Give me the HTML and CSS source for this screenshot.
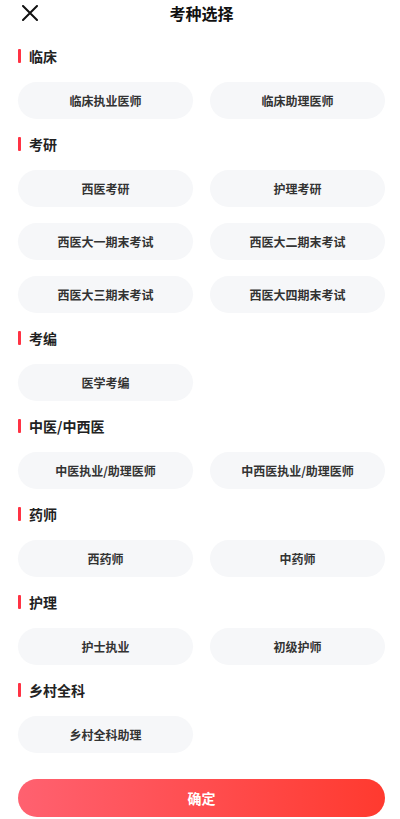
FILE: index.html
```html
<!DOCTYPE html>
<html lang="zh-CN">
<head>
<meta charset="utf-8">
<title>考种选择</title>
<link rel="stylesheet" href="styles.css">
</head>
<body>
<div class="page">
  <div class="topbar">
    <span class="close">
      <svg width="16" height="16" viewBox="0 0 16 16"><path d="M1 1L15 15M15 1L1 15" stroke="#111" stroke-width="2" stroke-linecap="round"/></svg>
    </span>
    <h1 class="title">考种选择</h1>
  </div>

  <section class="group">
    <h2 class="group-title">临床</h2>
    <div class="options">
      <div class="opt">临床执业医师</div>
      <div class="opt">临床助理医师</div>
    </div>
  </section>

  <section class="group">
    <h2 class="group-title">考研</h2>
    <div class="options">
      <div class="opt">西医考研</div>
      <div class="opt">护理考研</div>
      <div class="opt">西医大一期末考试</div>
      <div class="opt">西医大二期末考试</div>
      <div class="opt">西医大三期末考试</div>
      <div class="opt">西医大四期末考试</div>
    </div>
  </section>

  <section class="group">
    <h2 class="group-title">考编</h2>
    <div class="options">
      <div class="opt">医学考编</div>
    </div>
  </section>

  <section class="group">
    <h2 class="group-title">中医/中西医</h2>
    <div class="options">
      <div class="opt">中医执业/助理医师</div>
      <div class="opt">中西医执业/助理医师</div>
    </div>
  </section>

  <section class="group">
    <h2 class="group-title">药师</h2>
    <div class="options">
      <div class="opt">西药师</div>
      <div class="opt">中药师</div>
    </div>
  </section>

  <section class="group">
    <h2 class="group-title">护理</h2>
    <div class="options">
      <div class="opt">护士执业</div>
      <div class="opt">初级护师</div>
    </div>
  </section>

  <section class="group">
    <h2 class="group-title">乡村全科</h2>
    <div class="options">
      <div class="opt">乡村全科助理</div>
    </div>
  </section>

  <div class="confirm">确定</div>
</div>
</body>
</html>
```

FILE: styles.css
```css
* { box-sizing: border-box; }
html, body {
  margin: 0;
  padding: 0;
  background: #ffffff;
  font-family: "Noto Sans CJK SC", "Noto Sans", sans-serif;
  color: #222;
}
.page {
  padding: 0 15px 0 18px;
  display: flex;
  flex-direction: column;
}
.topbar {
  height: 26px;
  display: flex;
  align-items: center;
  justify-content: center;
  position: relative;
}
.close {
  position: absolute;
  left: 4px;
  top: 5px;
  width: 16px;
  height: 16px;
  display: block;
}
.close svg { display: block; }
.title {
  margin: 0;
  font-size: 16px;
  font-weight: 700;
  line-height: 26px;
  color: #111;
}
.group {
  margin-top: 20px;
  display: flex;
  flex-direction: column;
  gap: 16px;
}
.group + .group { margin-top: 15px; }
.group-title {
  margin: 0;
  height: 20px;
  line-height: 20px;
  font-size: 14px;
  font-weight: 700;
  color: #222;
  display: flex;
  align-items: center;
  gap: 8px;
}
.group-title::before {
  content: "";
  width: 3px;
  height: 14px;
  border-radius: 1px;
  background: #ff3344;
}
.options {
  display: grid;
  grid-template-columns: 1fr 1fr;
  column-gap: 17px;
  row-gap: 16px;
}
.opt {
  height: 37px;
  border-radius: 19px;
  background: #f6f7f9;
  display: flex;
  align-items: center;
  justify-content: center;
  font-size: 12px;
  font-weight: 700;
  color: #333;
}
.confirm {
  margin-top: 26px;
  height: 38px;
  border-radius: 19px;
  background: linear-gradient(90deg, #ff6170 0%, #ff3a2f 100%);
  color: #fff;
  font-size: 14px;
  font-weight: 700;
  display: flex;
  align-items: center;
  justify-content: center;
}
```
